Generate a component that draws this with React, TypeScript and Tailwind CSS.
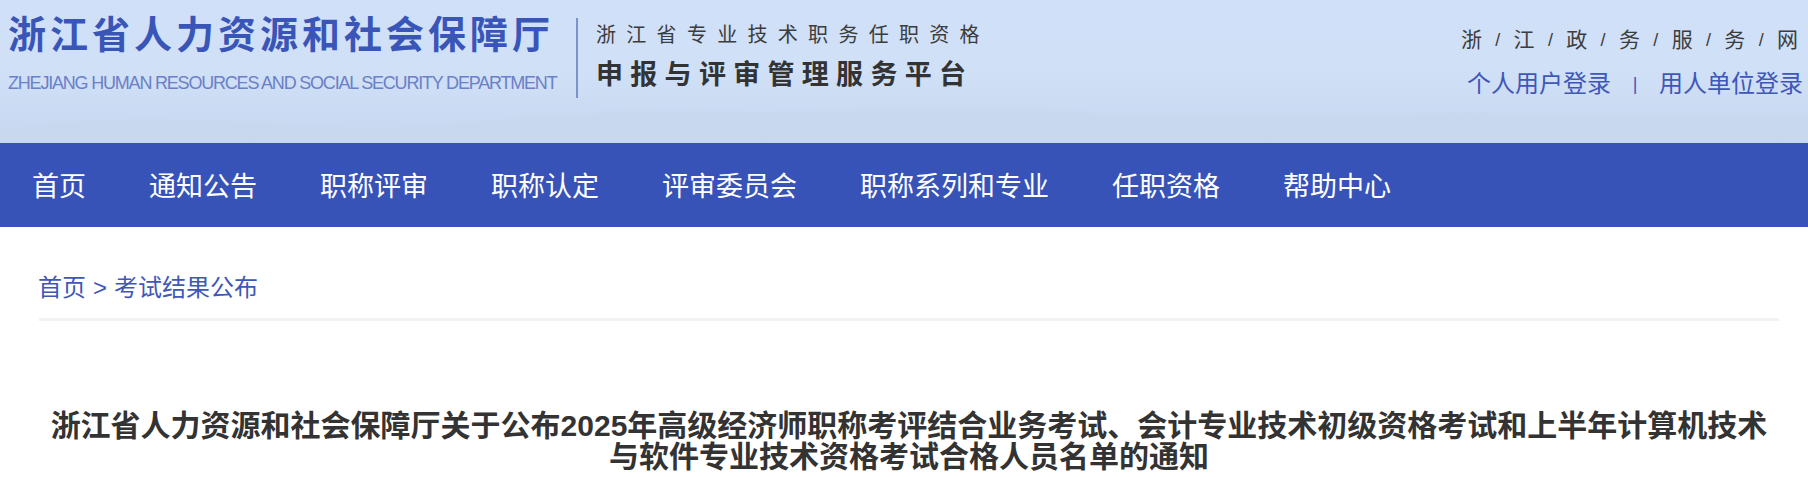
const cjk = "font-['Liberation_Sans','Noto_Sans_CJK_SC',sans-serif]";

const navItems = ["首页", "通知公告", "职称评审", "职称认定", "评审委员会", "职称系列和专业", "任职资格", "帮助中心"];
const govChars = ["浙", "江", "政", "务", "服", "务", "网"];

function Header() {
  return (
    <header className="relative flex h-[143px] items-start justify-between overflow-hidden bg-gradient-to-b from-[#cfe0f8] via-[#cfe0f7] to-[#c6d6ee]">
      <svg className="absolute inset-x-0 bottom-0 h-[50px] w-full" viewBox="0 0 1808 50" preserveAspectRatio="none">
        <path d="M0 38 C120 18 220 30 340 34 C480 38 540 14 700 18 C860 22 940 8 1100 20 C1280 34 1400 12 1540 22 C1660 30 1740 18 1808 24 V50 H0 Z" fill="#c8d8ef" opacity="0.6" />
      </svg>
      <div className="relative flex pl-2 pt-[18px]">
        <div className="w-[568px]">
          <div className="whitespace-nowrap text-[38px] font-bold leading-[34px] tracking-[4px] text-[#3a55b8]">
            浙江省人力资源和社会保障厅
          </div>
          <div className="mt-[20px] whitespace-nowrap text-[18px] leading-[22px] tracking-[-1.2px] text-[#6b80c8]">
            ZHEJIANG HUMAN RESOURCES AND SOCIAL SECURITY DEPARTMENT
          </div>
        </div>
        <div className="h-[80px] w-[2px] bg-[#7b92d0]" />
        <div className="pl-[18px]">
          <div className="mt-[2px] whitespace-nowrap text-[20px] leading-[30px] tracking-[10.3px] text-[#3c3c3c]">
            浙江省专业技术职务任职资格
          </div>
          <div className="mt-[8px] whitespace-nowrap text-[27px] font-bold leading-[34px] tracking-[7.3px] text-[#333]">
            申报与评审管理服务平台
          </div>
        </div>
      </div>
      <div className="relative flex flex-col items-end pr-[5px] pt-[26px]">
        <div className="flex items-center pr-[5px] text-[21px] leading-[28px] text-[#3c3c3c]">
          {govChars.map((c, i) => (
            <span key={i} className="flex items-center">
              {i > 0 && <span className="w-[31.7px] text-center text-[18px]">/</span>}
              {c}
            </span>
          ))}
        </div>
        <div className="mt-[14px] flex items-center text-[24px] leading-[32px] text-[#3f57b9]">
          <span>个人用户登录</span>
          <span className="w-[48px] text-center text-[18px]">|</span>
          <span>用人单位登录</span>
        </div>
      </div>
    </header>
  );
}

export default function App() {
  return (
    <div className={`h-[477px] overflow-hidden bg-white ${cjk}`}>
      <Header />
      <nav className="flex h-[84px] items-center gap-[63px] bg-[#3853b8] pl-[32px] pt-[5px] text-[27px] text-white">
        {navItems.map((n) => (
          <a key={n} className="whitespace-nowrap">
            {n}
          </a>
        ))}
      </nav>
      <div className="ml-[39px] mr-[29px] flex h-[94px] items-end border-b-[3px] border-[#f2f2f2] pb-[14px] text-[24px] leading-[32px] text-[#3f57b9]">
        <span className="-ml-[1px]">首页</span>
        <span className="px-[7px]">&gt;</span>
        <span>考试结果公布</span>
      </div>
      <h1 className="ml-[39px] mr-[29px] mt-[89px] text-center text-[30px] font-bold leading-[31px] text-[#333]">
        浙江省人力资源和社会保障厅关于公布2025年高级经济师职称考评结合业务考试、会计专业技术初级资格考试和上半年计算机技术与软件专业技术资格考试合格人员名单的通知
      </h1>
    </div>
  );
}
